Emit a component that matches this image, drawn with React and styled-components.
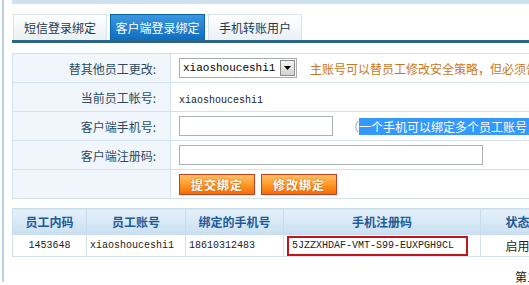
import styled, { createGlobalStyle } from 'styled-components';

const GlobalStyle = createGlobalStyle`
  html, body {
    margin: 0;
    padding: 0;
    overflow: hidden;
    background: #fff;
  }
  body {
    font-family: 'Noto Sans CJK SC', 'Liberation Sans', sans-serif;
    font-size: 12px;
  }
`;

const Page = styled.div`
  display: flex;
  width: 529px;
  height: 285px;
  overflow: hidden;
`;

const LeftRule = styled.div`
  flex-shrink: 0;
  width: 2px;
  height: 282px;
  margin-left: 2px;
  background: #b9d2e2;
`;

const Main = styled.div`
  flex-shrink: 0;
  width: 620px;
  margin-left: 8px;
`;

const TopBand = styled.div`
  height: 4px;
  background: #cfe1ed;
`;

const TabBar = styled.div`
  display: flex;
  gap: 3px;
  margin-top: 10px;
  padding-left: 1px;
  border-bottom: 3px solid #2a6685;
`;

const Tab = styled.div`
  display: flex;
  align-items: center;
  justify-content: center;
  width: ${(p) => (p.$active ? 95 : 94)}px;
  height: 26px;
  box-sizing: border-box;
  border: 1px solid ${(p) => (p.$active ? '#0d63ae' : '#d8e3ea')};
  border-bottom: none;
  background: ${(p) =>
    p.$active
      ? 'linear-gradient(#3a98e0, #0f6cc0)'
      : 'linear-gradient(#ffffff, #eaf0f4)'};
  color: ${(p) => (p.$active ? '#fff' : '#1b3a50')};
  font-size: 12px;
`;

const FormTable = styled.table`
  width: 100%;
  margin-top: 10px;
  border-collapse: collapse;
  border-left: 1px solid #d3e2ec;
`;

const FormRow = styled.tr`
  height: 29px;
`;

const LabelCell = styled.td`
  width: 143px;
  padding: 0 14px 0 0;
  border: 1px solid #d3e2ec;
  background: #f0f6fb;
  color: #2d4b62;
  text-align: right;
  white-space: nowrap;
`;

const ValueCell = styled.td`
  padding: 0 0 0 8px;
  border: 1px solid #d3e2ec;
  border-right: none;
  white-space: nowrap;
`;

const Line = styled.div`
  display: flex;
  align-items: center;
  gap: ${(p) => p.$gap || 0}px;
`;

const Select = styled.div`
  display: flex;
  align-items: center;
  width: 118px;
  height: 20px;
  box-sizing: border-box;
  border: 1px solid #a5acb2;
  padding-left: 3px;
  font-family: 'Liberation Mono', monospace;
  font-size: 11px;
  color: #000;
`;

const SelectText = styled.span`
  flex: 1;
`;

const SelectArrow = styled.span`
  display: flex;
  align-items: center;
  justify-content: center;
  width: 15px;
  height: 16px;
  margin-right: 1px;
  border: 1px solid #8c8c8c;
  box-sizing: border-box;
  background: linear-gradient(#f4f4f4, #d2d2d2);
`;

const Hint = styled.span`
  color: ${(p) => p.$color || '#c8761f'};
  font-size: 12px;
`;

const Plain = styled.span`
  font-family: 'Liberation Mono', monospace;
  font-size: 10px;
  color: #222;
`;

const TextInput = styled.div`
  width: ${(p) => p.$width}px;
  height: 20px;
  box-sizing: border-box;
  border: 1px solid #a9b0b6;
  background: #fff;
`;

const Selected = styled.span`
  background: #3399ff;
  color: #fff;
`;

const OrangeButton = styled.button`
  width: ${(p) => p.$width}px;
  height: 21px;
  padding: 0;
  border: 1px solid #c3401a;
  background: linear-gradient(#ffc066, #ff9a2a 50%, #f46d07);
  color: #fff;
  font-family: 'Noto Sans CJK SC', sans-serif;
  font-size: 12px;
  font-weight: 700;
  letter-spacing: 1px;
  text-shadow: 0 0 2px #b85a10;
  cursor: pointer;
`;

const DataTable = styled.table`
  width: 620px;
  margin-top: 9px;
  table-layout: fixed;
  border-collapse: collapse;
  border-left: 1px solid #d3e2ec;
`;

const HeadCell = styled.th`
  height: 25px;
  padding: 0;
  border: 1px solid #c9dcea;
  background: linear-gradient(#e5f1fa, #c9e0f2);
  color: #1d5a98;
  font-weight: 700;
  font-size: 12px;
  white-space: nowrap;
`;

const DataCell = styled.td`
  height: 21px;
  padding: 0 0 0 ${(p) => (p.$align === 'left' ? 3 : 0)}px;
  border: 1px solid #d3e2ec;
  text-align: ${(p) => p.$align || 'center'};
  font-family: ${(p) =>
    p.$cjk ? "'Noto Sans CJK SC', sans-serif" : "'Liberation Mono', monospace"};
  font-size: ${(p) => (p.$cjk ? 12 : 10)}px;
  color: #222;
  white-space: nowrap;
  overflow: hidden;
`;

const CodeBox = styled.span`
  display: inline-block;
  box-sizing: border-box;
  width: 181px;
  height: 20px;
  line-height: 16px;
  border: 2px solid #c3161c;
  padding-left: 3px;
  text-align: left;
  vertical-align: middle;
`;

const Pager = styled.div`
  padding: 11px 0 0 503px;
  font-size: 12px;
  color: #222;
  white-space: nowrap;
`;

function ArrowIcon() {
  return (
    <svg width="7" height="4" viewBox="0 0 7 4">
      <path d="M0 0h7L3.5 4z" fill="#000" />
    </svg>
  );
}

const tabs = ['短信登录绑定', '客户端登录绑定', '手机转账用户'];

const columns = [
  { title: '员工内码', width: 74 },
  { title: '员工账号', width: 99 },
  { title: '绑定的手机号', width: 98 },
  { title: '手机注册码', width: 197 },
  { title: '状态', width: 74 },
  { title: '', width: 78 },
];

export default function App() {
  return (
    <>
      <GlobalStyle />
      <Page>
        <LeftRule />
        <Main>
          <TopBand />
          <TabBar>
            {tabs.map((t, i) => (
              <Tab key={t} $active={i === 1}>
                {t}
              </Tab>
            ))}
          </TabBar>

          <FormTable>
            <tbody>
              <FormRow>
                <LabelCell>替其他员工更改:</LabelCell>
                <ValueCell>
                  <Line $gap={13}>
                    <Select>
                      <SelectText>xiaoshouceshi1</SelectText>
                      <SelectArrow>
                        <ArrowIcon />
                      </SelectArrow>
                    </Select>
                    <Hint>主账号可以替员工修改安全策略，但必须告知员工</Hint>
                  </Line>
                </ValueCell>
              </FormRow>
              <FormRow>
                <LabelCell>当前员工帐号:</LabelCell>
                <ValueCell>
                  <Plain>xiaoshouceshi1</Plain>
                </ValueCell>
              </FormRow>
              <FormRow>
                <LabelCell>客户端手机号:</LabelCell>
                <ValueCell>
                  <Line $gap={14}>
                    <TextInput $width={154} />
                    <Hint $color="#9aa6b0">
                      （<Selected>一个手机可以绑定多个员工账号，</Selected>
                    </Hint>
                  </Line>
                </ValueCell>
              </FormRow>
              <FormRow>
                <LabelCell>客户端注册码:</LabelCell>
                <ValueCell>
                  <TextInput $width={304} />
                </ValueCell>
              </FormRow>
              <FormRow>
                <LabelCell />
                <ValueCell>
                  <Line $gap={6}>
                    <OrangeButton $width={76}>提交绑定</OrangeButton>
                    <OrangeButton $width={76}>修改绑定</OrangeButton>
                  </Line>
                </ValueCell>
              </FormRow>
            </tbody>
          </FormTable>

          <DataTable>
            <colgroup>
              {columns.map((c, i) => (
                <col key={i} width={c.width} />
              ))}
            </colgroup>
            <thead>
              <tr>
                {columns.map((c, i) => (
                  <HeadCell key={i}>{c.title}</HeadCell>
                ))}
              </tr>
            </thead>
            <tbody>
              <tr>
                <DataCell>1453648</DataCell>
                <DataCell $align="left">xiaoshouceshi1</DataCell>
                <DataCell $align="left">18610312483</DataCell>
                <DataCell $align="left">
                  <CodeBox>5JZZXHDAF-VMT-S99-EUXPGH9CL</CodeBox>
                </DataCell>
                <DataCell $cjk>启用</DataCell>
                <DataCell />
              </tr>
            </tbody>
          </DataTable>

          <Pager>第1页 共1页</Pager>
        </Main>
      </Page>
    </>
  );
}
